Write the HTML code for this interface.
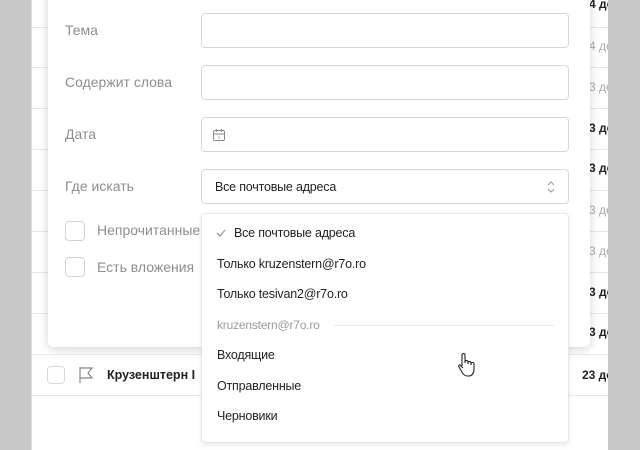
<!DOCTYPE html>
<html><head><meta charset="utf-8"><style>
*{margin:0;padding:0;box-sizing:border-box}
body{width:640px;height:450px;background:#c8c8c8;font-family:"Liberation Sans",sans-serif;position:relative;overflow:hidden}
.page{position:absolute;left:31px;top:0;width:577px;height:450px;background:#fff;border-left:1px solid #cfe3f2;overflow:hidden}
.row{position:absolute;left:0;width:577px;height:1px;background:#e6e8eb}
.d{position:absolute;left:557px;font-size:12px;color:#aaa;white-space:nowrap}
.d.b{color:#222;font-weight:bold}
.modal{position:absolute;left:48px;top:-10px;width:542px;height:357px;background:#fff;border-radius:6px;box-shadow:0 2px 10px rgba(0,0,0,.18)}
.lbl{position:absolute;left:65px;font-size:14px;color:#8a8d91;white-space:nowrap}
.inp{position:absolute;left:201px;width:368px;height:35px;border:1px solid #d5d7da;border-radius:4px;background:#fff}
.cb{position:absolute;left:65px;width:20px;height:20px;border:1px solid #cfd2d6;border-radius:4px}
.dd{position:absolute;left:201px;top:213px;width:368px;height:230px;background:#fff;border:1px solid #e4e6e9;border-radius:4px;box-shadow:0 2px 6px rgba(0,0,0,.08)}
.it{position:absolute;left:15px;font-size:12.5px;color:#222;white-space:nowrap;letter-spacing:-0.2px}
</style></head><body>
<div class="page">
<div class="row" style="top:27px"></div><div class="row" style="top:67px"></div><div class="row" style="top:108px"></div><div class="row" style="top:149px"></div><div class="row" style="top:190px"></div><div class="row" style="top:231px"></div><div class="row" style="top:272px"></div><div class="row" style="top:313px"></div><div class="row" style="top:354px"></div><div class="row" style="top:395px"></div>
<div class="d b" style="top:-3px">4 де</div>
<div class="d" style="top:39px">4 де</div>
<div class="d" style="top:80px">3 де</div>
<div class="d b" style="top:121px">3 де</div>
<div class="d b" style="top:161px">3 де</div>
<div class="d" style="top:203px">3 де</div>
<div class="d" style="top:244px">3 де</div>
<div class="d b" style="top:285px">3 де</div>
<div class="d b" style="top:325px">3 де</div>
<div class="d b" style="top:368px;left:550px">23 де</div>
<div style="position:absolute;left:15px;top:366px;width:18px;height:18px;border:1px solid #d5d7da;border-radius:4px"></div>
<svg style="position:absolute;left:46px;top:366px" width="16" height="18"><path d="M2 1v16M2 2h12l-4 5 4 5H2" fill="none" stroke="#888" stroke-width="1.2"/></svg>
<div style="position:absolute;left:75px;top:368px;font-size:12.5px;font-weight:bold;color:#222;white-space:nowrap">Крузенштерн I</div>
</div>
<div class="modal"></div>
<div class="lbl" style="top:22px">Тема</div>
<div class="inp" style="top:13px"></div>
<div class="lbl" style="top:74px">Содержит слова</div>
<div class="inp" style="top:65px"></div>
<div class="lbl" style="top:126px">Дата</div>
<div class="inp" style="top:117px"><svg style="position:absolute;left:10px;top:10px" width="14" height="14"><rect x="1.5" y="2.5" width="11" height="10" rx="1.5" fill="none" stroke="#888"/><path d="M1.5 6h11M4.5 1v3M9.5 1v3M7 8.5v2" stroke="#888" fill="none"/></svg></div>
<div class="lbl" style="top:178px">Где искать</div>
<div class="inp" style="top:169px"><span style="position:absolute;left:13px;top:10px;font-size:12.5px;color:#222;letter-spacing:-0.2px">Все почтовые адреса</span><svg style="position:absolute;left:344px;top:10px" width="10" height="14"><path d="M2 5l3-3 3 3M2 9l3 3 3-3" fill="none" stroke="#999"/></svg></div>
<div class="cb" style="top:221px"></div><div class="lbl" style="left:97px;top:222px">Непрочитанные</div>
<div class="cb" style="top:257px"></div><div class="lbl" style="left:97px;top:259px">Есть вложения</div>
<div class="dd">
<svg style="position:absolute;left:14px;top:14px" width="10" height="10"><path d="M1 5l3 3 5-6" fill="none" stroke="#999" stroke-width="1.3"/></svg>
<div class="it" style="left:32px;top:12px">Все почтовые адреса</div>
<div class="it" style="top:43px">Только kruzenstern@r7o.ro</div>
<div class="it" style="top:73px">Только tesivan2@r7o.ro</div>
<div class="it" style="top:104px;color:#999;font-size:12px">kruzenstern@r7o.ro</div>
<div style="position:absolute;left:132px;top:111px;width:220px;height:1px;background:#e6e8eb"></div>
<div class="it" style="top:134px">Входящие</div>
<div class="it" style="top:165px">Отправленные</div>
<div class="it" style="top:195px">Черновики</div>
</div>
<svg style="position:absolute;left:456px;top:352px" width="20" height="26"><path d="M6 14V3a1.5 1.5 0 013 0v8M9 10a1.5 1.5 0 013 0v2M12 11a1.5 1.5 0 013 0v2M15 12a1.5 1.5 0 013 0v5c0 4-2 7-5 7h-2c-2 0-4-2-5-4l-3-5c-1-2 1-3 2-1l2 2" fill="#fff" stroke="#222" stroke-width="1.1"/></svg>
</body></html>
